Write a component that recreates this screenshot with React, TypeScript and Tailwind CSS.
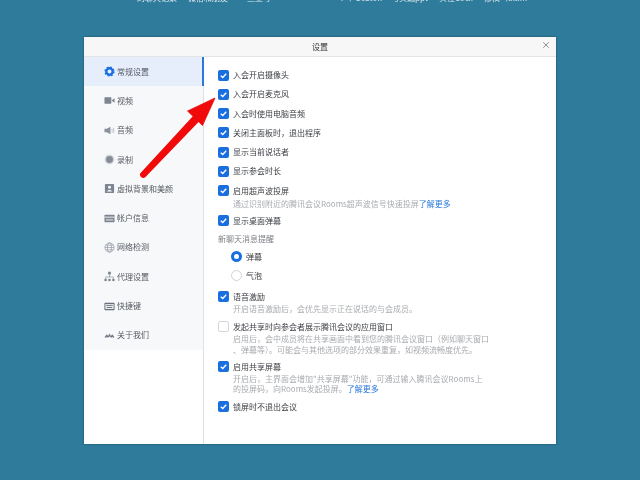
import type { ReactNode } from "react"
import { X } from "lucide-react"

const iconClass = "w-[11px] h-[11px] shrink-0"

const GearIcon = () => (
  <svg viewBox="0 0 12 12" className={iconClass}>
    <circle cx="6" cy="6" r="3.500" fill="none" stroke="#1a6fe0" strokeWidth="2.600" />
    <circle cx="6" cy="6" r="4.900" fill="none" stroke="#1a6fe0" strokeWidth="1.400" strokeDasharray="2.050 1.800" />
  </svg>
)

const VideoIcon = () => (
  <svg viewBox="0 0 12 12" className={iconClass}>
    <rect x="0.500" y="2.500" width="7.500" height="7" rx="0.500" fill="#7d8591" />
    <path d="M8.800 5.500 11.500 3.500v5L8.800 6.500z" fill="#7d8591" />
  </svg>
)

const AudioIcon = () => (
  <svg viewBox="0 0 12 12" className={iconClass}>
    <path d="M.5 4h2.500L7 1.800v8.400L3 8H.5z" fill="#8a919c" />
    <path d="M8.500 4.200q1.200 1.800 0 3.600M10 3q1.800 3 0 6" fill="none" stroke="#a9afb8" strokeWidth="0.800" />
  </svg>
)

const RecordIcon = () => (
  <svg viewBox="0 0 12 12" className={iconClass}>
    <circle cx="6" cy="6" r="5.400" fill="#d5d8dc" />
    <circle cx="6" cy="6" r="3.800" fill="#858c97" />
  </svg>
)

const BackgroundIcon = () => (
  <svg viewBox="0 0 12 12" className={iconClass}>
    <rect x="1" y="1" width="10" height="10" rx="1" fill="#7d8591" />
    <circle cx="6" cy="4.600" r="1.600" fill="#f7f8fa" />
    <path d="M3 9.200q3-3.600 6 0z" fill="#f7f8fa" />
  </svg>
)

const AccountIcon = () => (
  <svg viewBox="0 0 12 12" className={iconClass}>
    <rect x="0.500" y="2" width="11" height="8" rx="0.800" fill="#7d8591" />
    <rect x="0.500" y="4" width="11" height="1" fill="#f7f8fa" />
    <rect x="2" y="6.500" width="8" height="2" fill="#b9bec6" />
  </svg>
)

const NetworkIcon = () => (
  <svg viewBox="0 0 12 12" className={iconClass} fill="none" stroke="#8a919c" strokeWidth="0.700">
    <circle cx="6" cy="6" r="5" />
    <ellipse cx="6" cy="6" rx="2.200" ry="5" />
    <path d="M1 6h10M1.800 3.500h8.400M1.800 8.500h8.400" />
  </svg>
)

const ProxyIcon = () => (
  <svg viewBox="0 0 12 12" className={iconClass}>
    <rect x="4.500" y="0.800" width="3" height="3" fill="#7d8591" />
    <path d="M6 3.800v3M1.800 8.500V6.500h8.400v2" fill="none" stroke="#8a919c" strokeWidth="0.700" />
    <rect x="0.500" y="8.500" width="2.500" height="2.500" fill="#7d8591" />
    <rect x="4.700" y="8.500" width="2.500" height="2.500" fill="#7d8591" />
    <rect x="9" y="8.500" width="2.500" height="2.500" fill="#7d8591" />
  </svg>
)

const KeyboardIcon = () => (
  <svg viewBox="0 0 12 12" className={iconClass}>
    <rect x="0.500" y="2" width="11" height="8" rx="1" fill="#5f6773" />
    <rect x="1.500" y="3.200" width="9" height="5.600" fill="#eef0f3" />
    <rect x="2.500" y="4.200" width="7" height="1" fill="#5f6773" />
    <rect x="3" y="6.500" width="6" height="1" fill="#5f6773" />
  </svg>
)

const AboutIcon = () => (
  <svg viewBox="0 0 12 12" className={iconClass}>
    <path d="M.5 8 3 4.500l1.500 2L6 3.800l1.500 2.700L9 4.500 11.500 8l-1.500.5-1-1-1 1-2-1.300-2 1.300-1-1-1 1z" fill="#737b87" />
  </svg>
)

const navItems: { label: string; icon: ReactNode; active?: boolean }[] = [
  { label: "常规设置", icon: <GearIcon />, active: true },
  { label: "视频", icon: <VideoIcon /> },
  { label: "音频", icon: <AudioIcon /> },
  { label: "录制", icon: <RecordIcon /> },
  { label: "虚拟背景和美颜", icon: <BackgroundIcon /> },
  { label: "帐户信息", icon: <AccountIcon /> },
  { label: "网络检测", icon: <NetworkIcon /> },
  { label: "代理设置", icon: <ProxyIcon /> },
  { label: "快捷键", icon: <KeyboardIcon /> },
  { label: "关于我们", icon: <AboutIcon /> },
]

function CheckRow({ label, checked = true, className = "" }: { label: string; checked?: boolean; className?: string }) {
  return (
    <div className={`flex items-center h-[12px] ${className}`}>
      {checked ? (
        <span className="w-[11px] h-[11px] rounded-[2px] bg-[#1a6fe0] flex items-center justify-center shrink-0">
          <svg viewBox="0 0 10 10" className="w-[9px] h-[9px]" fill="none" stroke="#fff" strokeWidth="1.500">
            <path d="M2 5.200 4.200 7.300 8 3" />
          </svg>
        </span>
      ) : (
        <span className="w-[11px] h-[11px] rounded-[2px] bg-white border border-[#d4d6da] shrink-0" />
      )}
      <span className="ml-[4px] text-[8px] leading-[12px] text-[#3a3d42] whitespace-nowrap">{label}</span>
    </div>
  )
}

function Desc({ children, className = "" }: { children: ReactNode; className?: string }) {
  return <p className={`ml-[15px] text-[8px] leading-[12px] text-[#a9abaf] whitespace-nowrap ${className}`}>{children}</p>
}

function RadioRow({ label, on, className = "" }: { label: string; on?: boolean; className?: string }) {
  return (
    <div className={`flex items-center h-[12px] ml-[13px] ${className}`}>
      {on ? (
        <span className="w-[11px] h-[11px] rounded-full border-[3px] border-[#1a6fe0] bg-white shrink-0" />
      ) : (
        <span className="w-[11px] h-[11px] rounded-full border border-[#d0d2d6] bg-white shrink-0" />
      )}
      <span className="ml-[4px] text-[8px] leading-[12px] text-[#3a3d42]">{label}</span>
    </div>
  )
}

export default function App() {
  return (
    <div className="w-[640px] h-[480px] overflow-hidden bg-[#2f7b9c]">
      <div
        className="relative w-[640px] h-[480px] bg-[#2f7b9c] flex flex-col items-start blur-[0.3px]"
        style={{ fontFamily: '"Noto Sans CJK SC", "Noto Sans", sans-serif' }}
      >
        <div className="h-[37px] w-full overflow-hidden">
          <div className="flex -mt-[8px] text-[8px] leading-[12px] text-[#dbe8ee] whitespace-nowrap">
            <span className="ml-[137px]">的聊天记录</span>
            <span className="ml-[11px]">微信和朋友</span>
            <span className="ml-[19px]">三亚号</span>
            <span className="ml-[69px]">7 个 Seaton</span>
            <span className="ml-[9px]">与实编ppt</span>
            <span className="ml-[11px]">实在docx</span>
            <span className="ml-[11px]">修稿（txt.m</span>
          </div>
        </div>

        <div className="ml-[84px] w-[472px] h-[407px] bg-white flex flex-col shadow-[0_0_2px_rgba(0,0,0,0.4)]">
          <div className="relative h-[20px] shrink-0 bg-[#f7f7f8] border-b border-[#e4e5e7] flex items-center justify-center">
            <span className="text-[8px] leading-[12px] text-[#333]">设置</span>
            <X className="absolute right-[5px] top-[3px] w-[10px] h-[10px] text-[#555]" strokeWidth={1.500} />
          </div>

          <div className="flex flex-1 min-h-0">
            <div className="w-[120px] shrink-0 border-r border-[#dfe1e4]">
              <div className="bg-[#f7f8fa]">
                {navItems.map((item) => (
                  <div
                    key={item.label}
                    className={`h-[29.300px] flex items-center pl-[20px] gap-[2px] ${
                      item.active ? "bg-[#e6eefc] border-r-2 border-[#2a78dc] -mr-[1px]" : ""
                    }`}
                  >
                    {item.icon}
                    <span className="text-[8px] leading-[12px] text-[#565a61] whitespace-nowrap">{item.label}</span>
                  </div>
                ))}
              </div>
            </div>

            <div className="flex-1 pl-[14px] pt-[12px]">
              <CheckRow label="入会开启摄像头" />
              <CheckRow label="入会开启麦克风" className="mt-[7.300px]" />
              <CheckRow label="入会时使用电脑音频" className="mt-[7.300px]" />
              <CheckRow label="关闭主面板时，退出程序" className="mt-[7.300px]" />
              <CheckRow label="显示当前说话者" className="mt-[7.300px]" />
              <CheckRow label="显示参会时长" className="mt-[7.300px]" />
              <CheckRow label="启用超声波投屏" className="mt-[7.300px]" />
              <Desc className="mt-[1px]">
                通过识别附近的腾讯会议Rooms超声波信号快速投屏<span className="text-[#2a78dc]">了解更多</span>
              </Desc>
              <CheckRow label="显示桌面弹幕" className="mt-[5px]" />
              <p className="mt-[6px] text-[8px] leading-[12px] text-[#7b7e83]">新聊天消息提醒</p>
              <RadioRow label="弹幕" on className="mt-[6px]" />
              <RadioRow label="气泡" className="mt-[7px]" />
              <CheckRow label="语音激励" className="mt-[9px]" />
              <Desc>开启语音激励后，会优先显示正在说话的与会成员。</Desc>
              <CheckRow label="发起共享时向参会者展示腾讯会议的应用窗口" checked={false} className="mt-[6px]" />
              <Desc>启用后，会中成员将在共享画面中看到您的腾讯会议窗口（例如聊天窗口</Desc>
              <Desc className="-mt-[1px]">、弹幕等）。可能会与其他选项的部分效果重复，如视频流畅度优先。</Desc>
              <CheckRow label="启用共享屏幕" className="mt-[5px]" />
              <Desc>开启后，主界面会增加"共享屏幕"功能，可通过输入腾讯会议Rooms上</Desc>
              <Desc className="-mt-[1.500px]">
                的投屏码，向Rooms发起投屏。<span className="text-[#2a78dc]">了解更多</span>
              </Desc>
              <CheckRow label="锁屏时不退出会议" className="mt-[5.500px]" />
            </div>
          </div>
        </div>

        {/* red arrow annotation on top of the window */}
        <svg viewBox="0 0 640 480" className="absolute inset-0 w-[640px] h-[480px] pointer-events-none">
          <path d="M141 172.500 193.500 115.500l6 5.500-54 56a2.800 2.800 0 0 1-4.500-4.500z" fill="#f00a0a" />
          <path d="M215 98 187.500 111 202.500 125.500z" fill="#f00a0a" stroke="#f00a0a" strokeWidth="0.800" strokeLinejoin="round" />
        </svg>
      </div>
    </div>
  )
}
